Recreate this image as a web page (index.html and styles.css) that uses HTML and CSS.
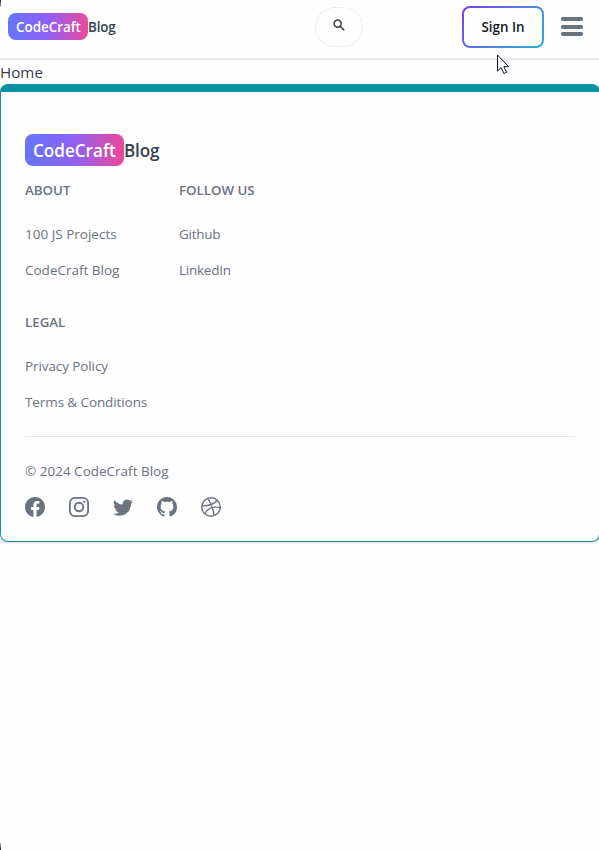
FILE: index.html
```html
<!DOCTYPE html>
<html lang="en">
<head>
<meta charset="utf-8">
<title>CodeCraft Blog</title>
<link rel="stylesheet" href="styles.css">
</head>
<body>
<div class="page">
  <header class="navbar">
    <a class="brand"><span class="badge">CodeCraft</span><span class="blog">Blog</span></a>
    <button class="search" aria-label="Search"><svg width="16" height="16" viewBox="0 0 1024 1024" fill="currentColor"><path d="M909.600 854.500L649.900 594.800C690.200 542.700 712 479 712 412c0-80.200-31.300-155.400-87.900-212.100-56.600-56.700-132-87.900-212.100-87.900s-155.500 31.300-212.100 87.900C143.200 256.500 112 331.800 112 412c0 80.100 31.300 155.500 87.900 212.100C256.500 680.800 331.800 712 412 712c67 0 130.600-21.800 182.700-62l259.700 259.600a8.200 8.200 0 0 0 11.600 0l43.600-43.500a8.200 8.200 0 0 0 0-11.600zM570.400 570.400C528 612.700 471.800 636 412 636s-116-23.300-158.400-65.600C211.300 528 188 471.800 188 412s23.300-116.100 65.600-158.400C296 211.300 352.200 188 412 188s116.100 23.200 158.400 65.600S636 352.200 636 412s-23.300 116.100-65.600 158.400z" stroke="currentColor" stroke-width="26"/></svg></button>
    <div class="actions">
      <button class="sign-in"><span>Sign In</span></button>
      <button class="menu" aria-label="Menu"><i></i><i></i><i></i></button>
    </div>
    <svg class="cursor" width="14" height="21" viewBox="0 0 14 21"><path d="M1.500 1v16l3.700-3.500 2.600 6 2.700-1.200-2.600-5.600h4.800z" fill="#fff" stroke="#111827" stroke-width="1"/></svg>
  </header>
  <main class="home"><span>Home</span></main>
  <footer class="footer">
    <a class="brand brand-large"><span class="badge">CodeCraft</span><span class="blog">Blog</span></a>
    <div class="links">
      <section><h2>About</h2><ul><li>100 JS Projects</li><li>CodeCraft Blog</li></ul></section>
      <section class="follow"><h2>Follow us</h2><ul><li>Github</li><li>LinkedIn</li></ul></section>
      <section class="legal"><h2>Legal</h2><ul><li>Privacy Policy</li><li>Terms &amp; Conditions</li></ul></section>
    </div>
    <hr>
    <div class="copyright">© 2024 CodeCraft Blog</div>
    <div class="social">
      <svg viewBox="0 0 16 16"><path d="M16 8.049c0-4.446-3.582-8.050-8-8.050C3.580 0 0 3.603 0 8.050c0 4.017 2.926 7.347 6.750 7.951v-5.625h-2.030V8.050H6.750V6.275c0-2.017 1.195-3.131 3.022-3.131.876 0 1.791.157 1.791.157v1.980h-1.009c-.993 0-1.303.621-1.303 1.258v1.510h2.218l-.354 2.326H9.250V16c3.824-.604 6.750-3.934 6.750-7.951z"/></svg>
      <svg viewBox="0 0 16 16"><g fill="none" stroke="currentColor" stroke-width="1.440"><rect x=".72" y=".72" width="14.560" height="14.560" rx="4"/><circle cx="8" cy="8" r="3.400"/></g><circle cx="12.270" cy="3.730" r=".96"/></svg>
      <svg viewBox="0 0 16 16"><path d="M5.026 15c6.038 0 9.341-5.003 9.341-9.334 0-.14 0-.282-.006-.422A6.685 6.685 0 0 0 16 3.542a6.658 6.658 0 0 1-1.889.518 3.301 3.301 0 0 0 1.447-1.817 6.533 6.533 0 0 1-2.087.793A3.286 3.286 0 0 0 7.875 6.030a9.325 9.325 0 0 1-6.767-3.429 3.289 3.289 0 0 0 1.018 4.382A3.323 3.323 0 0 1 .64 6.575v.045a3.288 3.288 0 0 0 2.632 3.218 3.203 3.203 0 0 1-.865.115 3.230 3.230 0 0 1-.614-.057 3.283 3.283 0 0 0 3.067 2.277A6.588 6.588 0 0 1 .78 13.580a6.320 6.320 0 0 1-.78-.045A9.344 9.344 0 0 0 5.026 15z"/></svg>
      <svg viewBox="0 0 16 16"><path d="M8 0C3.580 0 0 3.580 0 8c0 3.540 2.290 6.530 5.470 7.590.4.070.55-.17.55-.38 0-.19-.01-.82-.01-1.490-2.010.37-2.530-.49-2.690-.94-.09-.23-.48-.94-.82-1.130-.28-.15-.68-.52-.01-.53.63-.01 1.080.58 1.230.82.72 1.210 1.870.87 2.330.66.070-.52.280-.87.510-1.070-1.780-.2-3.640-.89-3.640-3.950 0-.87.310-1.590.82-2.150-.08-.2-.36-1.020.080-2.120 0 0 .67-.21 2.200.82.640-.18 1.320-.27 2-.27s1.360.090 2 .27c1.530-1.040 2.200-.82 2.200-.82.440 1.100.160 1.920.080 2.120.510.560.82 1.270.82 2.150 0 3.070-1.870 3.750-3.650 3.950.290.250.540.730.540 1.480 0 1.070-.01 1.930-.01 2.200 0 .21.150.46.550.38A8.012 8.012 0 0 0 16 8c0-4.420-3.580-8-8-8z"/></svg>
      <svg viewBox="0 0 16 16"><g fill="none" stroke="currentColor" stroke-width="1.150"><circle cx="8" cy="8" r="7.400"/><path d="M5.300 1.100C8 4.500 9.700 8.900 10.500 15M.7 7.100C6 7.100 10.300 6.100 13 2.800M3 13.200C5.400 9.100 9.700 7.300 15.400 8.500"/></g></svg>
    </div>
  </footer>
</div>
</body>
</html>
```
FILE: styles.css
```css
* { box-sizing: border-box; }
body { margin: 0; background: #fefefe; color: #374151; font-family: "Open Sans", "Noto Sans", sans-serif; overflow: hidden; }
.page { position: relative; width: 600px; height: 850px; overflow: hidden; }
.page::before, .page::after { content: ""; position: absolute; z-index: 3; left: 0; width: 1px; height: 7px; background: linear-gradient(#22202c, #b8b8c6); }
.page::before { top: 0; }
.page::after { bottom: 0; transform: scaleY(-1); }
button { font: inherit; padding: 0; cursor: pointer; }
.navbar { position: relative; height: 60px; padding: 0 17px 5px 8px; border-bottom: 2px solid #e5e7eb; display: grid; grid-template-columns: 307px 48px 1fr; align-items: center; }
.brand { display: flex; align-items: center; font-size: 13.4px; line-height: 20px; font-weight: 600; color: #374151; white-space: nowrap; }
.badge { width: 80px; height: 27px; padding: 4px 0 3px 8px; border-radius: 8px; color: #fff; background: linear-gradient(90deg, #6675f7, #8b62f7 48%, #ec4899); }
.blog { font-weight: 600; letter-spacing: -.15px; }
.search { width: 48px; height: 40px; border: 1px dotted #dfe2e8; border-radius: 20px; background: transparent; color: #1f2937; display: flex; justify-content: center; align-items: center; padding-bottom: 4px; }
.search svg { width: 14px; height: 14px; }
.actions { display: flex; justify-content: flex-end; align-items: center; gap: 17px; }
.sign-in { width: 82px; height: 42px; padding: 2px; border: 0; border-radius: 8px; background: linear-gradient(135deg, #7c3aed, #5b7be5 48%, #22b1d6); color: #111827; font-size: 13.4px; font-weight: 600; }
.sign-in span { display: flex; align-items: center; justify-content: center; height: 38px; border-radius: 6px; background: #fefefe; }
.menu { width: 22px; height: 19px; border: 0; background: none; display: flex; flex-direction: column; justify-content: space-between; }
.menu i { display: block; width: 22px; height: 4px; border-radius: 1.5px; background: #6b7280; }
.cursor { position: absolute; left: 496px; top: 54px; z-index: 2; }
.home { height: 24px; font-size: 15.2px; line-height: 24px; }
.footer { height: 458px; border: 1px solid #0891a2; border-top-width: 8px; border-radius: 8px; padding: 42px 24px 0; color: #6b7280; font-size: 13.5px; box-shadow: 0 1px 2px rgb(0 0 0 / 12%); }
.brand-large { font-size: 17.1px; line-height: 25px; }
.brand-large .badge { width: 99px; height: 32px; }
.links { display: grid; grid-template-columns: 122px 1fr; gap: 32px; margin-top: 14px; }
h2 { margin: 0 0 24px; font-size: 13.3px; line-height: 20px; font-weight: 600; text-transform: uppercase; }
ul { list-style: none; margin: 0; padding: 0; display: grid; gap: 16px; }
li { line-height: 20px; white-space: nowrap; }
.follow li { letter-spacing: -.25px; }
.legal li { letter-spacing: -.1px; }
.footer hr { border: 0; border-top: 1px solid #e5e7eb; margin: 24px 0; }
.copyright { line-height: 20px; }
.social { display: flex; gap: 24px; margin-top: 16px; }
.social svg { width: 20px; height: 20px; fill: currentColor; display: block; }
```
